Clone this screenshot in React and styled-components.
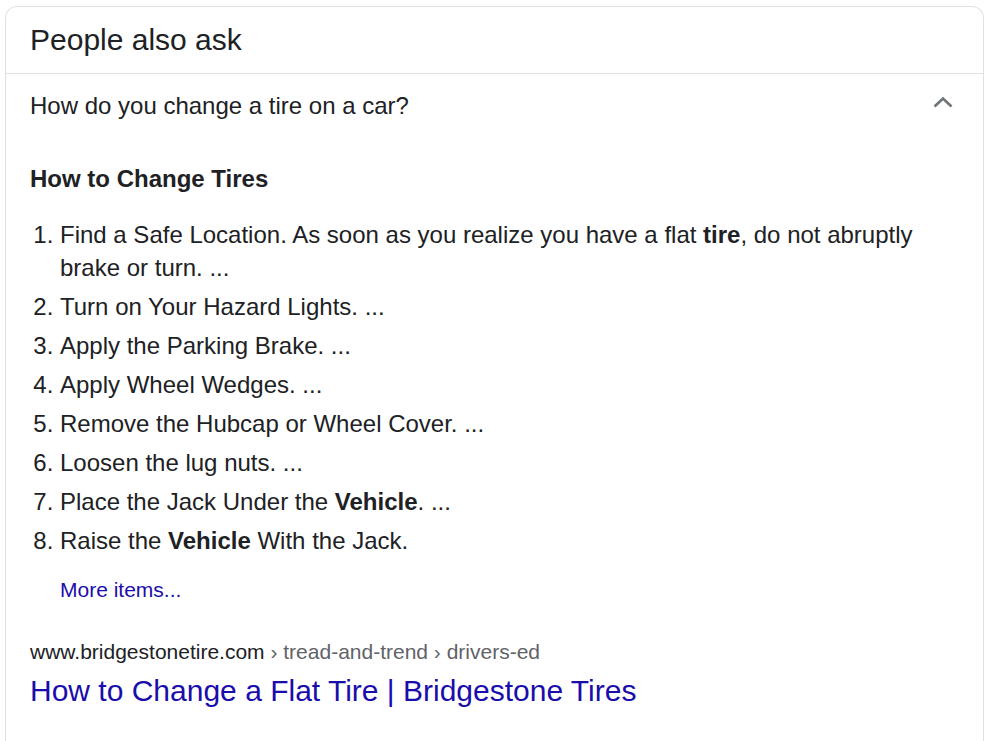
import React from "react";
import styled, { createGlobalStyle } from "styled-components";

const Global = createGlobalStyle`
  html, body { margin: 0; padding: 0; background: #fff; }
  body { font-family: "Liberation Sans", Arial, sans-serif; color: #202124; }
`;

const Card = styled.div`
  margin: 6px 0 0 5px;
  width: 979px;
  box-sizing: border-box;
  border: 1px solid #dfe1e5;
  border-bottom: none;
  border-radius: 12px 12px 0 0;
  background: #fff;
`;

const Header = styled.div`
  height: 66px;
  display: flex;
  align-items: center;
  padding: 0 24px;
  font-size: 30px;
  color: #202124;
  border-bottom: 1px solid #dfe1e5;
`;

const Question = styled.div`
  height: 64px;
  display: flex;
  align-items: center;
  justify-content: space-between;
  padding: 0 28px 0 24px;
  font-size: 24px;
  color: #202124;
`;

const Chevron = styled.svg`
  width: 24px;
  height: 24px;
  display: block;
`;

const Body = styled.div`
  padding: 24px 24px 0 24px;
  border-bottom: 1px solid #dfe1e5;
  height: 604px;
  box-sizing: border-box;
`;

const Heading = styled.div`
  font-size: 24px;
  font-weight: bold;
  line-height: 33px;
`;

const List = styled.ol`
  margin: 23px 0 0 0;
  padding-left: 30px;
  font-size: 24px;
  line-height: 33px;
`;

const Item = styled.li`
  margin-bottom: 6px;
  &:last-child { margin-bottom: 0; }
`;

const More = styled.a`
  display: block;
  margin: 16px 0 0 30px;
  font-size: 21px;
  line-height: 33px;
  color: #1a0dab;
  text-decoration: none;
`;

const Cite = styled.div`
  margin-top: 31px;
  font-size: 21px;
  line-height: 30px;
  color: #202124;
`;

const Crumb = styled.span`
  color: #5f6368;
`;

const Title = styled.a`
  display: block;
  font-size: 30px;
  line-height: 47px;
  color: #1a0dab;
  text-decoration: none;
`;

export default function App() {
  const items = [
    <>Find a Safe Location. As soon as you realize you have a flat <b>tire</b>, do not abruptly brake or turn. ...</>,
    <>Turn on Your Hazard Lights. ...</>,
    <>Apply the Parking Brake. ...</>,
    <>Apply Wheel Wedges. ...</>,
    <>Remove the Hubcap or Wheel Cover. ...</>,
    <>Loosen the lug nuts. ...</>,
    <>Place the Jack Under the <b>Vehicle</b>. ...</>,
    <>Raise the <b>Vehicle</b> With the Jack.</>,
  ];
  return (
    <>
      <Global />
      <Card>
        <Header>People also ask</Header>
        <Question>
          <span>How do you change a tire on a car?</span>
          <Chevron viewBox="0 0 24 24">
            <path d="M3.5 12.5 L12 4.5 L20.5 12.5" fill="none" stroke="#70757a" strokeWidth="2.7" />
          </Chevron>
        </Question>
        <Body>
          <Heading>How to Change Tires</Heading>
          <List>
            {items.map((c, i) => (
              <Item key={i}>{c}</Item>
            ))}
          </List>
          <More href="#">More items...</More>
          <Cite>
            www.bridgestonetire.com<Crumb> › tread-and-trend › drivers-ed</Crumb>
          </Cite>
          <Title href="#">How to Change a Flat Tire | Bridgestone Tires</Title>
        </Body>
      </Card>
    </>
  );
}
